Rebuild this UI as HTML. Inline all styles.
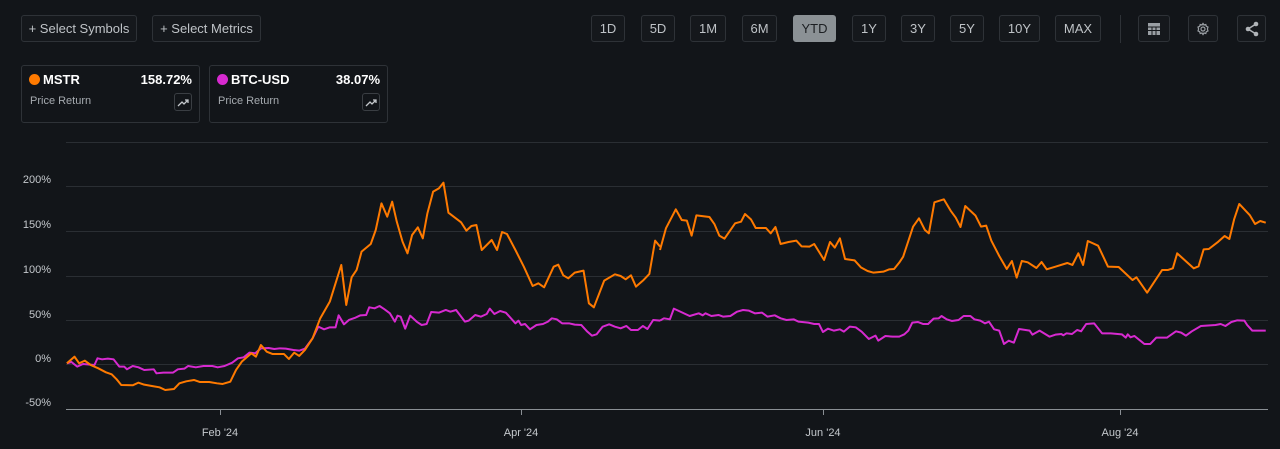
<!DOCTYPE html>
<html><head><style>
body{margin:0;background:#121519;width:1280px;height:449px;overflow:hidden;font-family:"Liberation Sans",sans-serif;position:relative}
.b{position:absolute;top:15px;height:27px;border:1px solid #2e3237;border-radius:3px;box-sizing:border-box;color:#bfc3c7;font-size:13px;display:flex;align-items:center;justify-content:center;background:#15181c}
.card{position:absolute;top:65px;height:58px;width:179px;border:1px solid #2e3237;border-radius:3px;box-sizing:border-box}
.dot{position:absolute;left:7px;top:8px;width:11px;height:11px;border-radius:50%}
.nm{position:absolute;left:21px;top:6px;color:#fff;font-weight:bold;font-size:13px}
.pc{position:absolute;right:7px;top:6px;color:#fff;font-weight:bold;font-size:13px}
.pr{position:absolute;left:8px;top:29px;color:#a6abb0;font-size:11px}
.ic{position:absolute;right:7px;top:27px;width:18px;height:18px;border:1px solid #3a3e43;border-radius:3px;box-sizing:border-box}
.yl{position:absolute;left:0;width:51px;text-align:right;color:#c4c8cc;font-size:11px}
.xl{position:absolute;top:427px;color:#c4c8cc;font-size:11px;width:80px;text-align:center}
</style></head><body>
<div class="b" style="left:21px;width:116px">+ Select Symbols</div>
<div class="b" style="left:152px;width:109px">+ Select Metrics</div>
<div class="b" style="left:591px;width:34px">1D</div>
<div class="b" style="left:641px;width:34px">5D</div>
<div class="b" style="left:690px;width:36px">1M</div>
<div class="b" style="left:742px;width:35px">6M</div>
<div class="b" style="left:793px;width:43px;background:#8b9195;color:#1c1f22;border-color:#8b9195">YTD</div>
<div class="b" style="left:852px;width:34px">1Y</div>
<div class="b" style="left:901px;width:34px">3Y</div>
<div class="b" style="left:950px;width:34px">5Y</div>
<div class="b" style="left:999px;width:41px">10Y</div>
<div class="b" style="left:1055px;width:46px">MAX</div>
<div style="position:absolute;left:1120px;top:15px;width:1px;height:28px;background:#2e3237"></div>
<div class="b" style="left:1138px;width:32px"><svg width="12" height="12" viewBox="0 0 12 12"><rect x="0" y="0" width="12" height="12" fill="#9a9fa4"/><path d="M0 4h12M0 7.5h12M4 4v8M8 4v8" stroke="#15181c" stroke-width="1"/></svg></div>
<div class="b" style="left:1188px;width:30px"><svg width="14" height="14" viewBox="0 0 14 14" fill="none" stroke="#9a9fa4" stroke-width="1.2"><circle cx="7" cy="7" r="2"/><path d="M7 1.5l1 1.5 1.8-.5.5 1.8 1.7.8-.6 1.9.6 1.9-1.7.8-.5 1.8-1.8-.5-1 1.5-1-1.5-1.8.5-.5-1.8-1.7-.8.6-1.9-.6-1.9 1.7-.8.5-1.8 1.8.5z"/></svg></div>
<div class="b" style="left:1237px;width:29px"><svg width="16" height="16" viewBox="0 0 16 16"><path d="M12 3L4 8l8 5" stroke="#b0b4b8" stroke-width="1.5" fill="none"/><circle cx="12" cy="3" r="2.3" fill="#b0b4b8"/><circle cx="4" cy="8" r="2.3" fill="#b0b4b8"/><circle cx="12" cy="13" r="2.3" fill="#b0b4b8"/></svg></div>

<div class="card" style="left:21px"><div class="dot" style="background:#ff7a00"></div><div class="nm">MSTR</div><div class="pc">158.72%</div><div class="pr">Price Return</div><div class="ic"><svg width="16" height="16" viewBox="0 0 16 16"><path d="M3 12l4-4 2 2 4-4M10 6h3v3" stroke="#c4c8cc" stroke-width="1.3" fill="none"/></svg></div></div>
<div class="card" style="left:209px"><div class="dot" style="background:#d72ad0"></div><div class="nm">BTC-USD</div><div class="pc">38.07%</div><div class="pr">Price Return</div><div class="ic"><svg width="16" height="16" viewBox="0 0 16 16"><path d="M3 12l4-4 2 2 4-4M10 6h3v3" stroke="#c4c8cc" stroke-width="1.3" fill="none"/></svg></div></div>

<svg style="position:absolute;left:0;top:0" width="1280" height="449">
<g stroke="#2a2e33" stroke-width="1">
<path d="M66 142.5H1268M66 186.5H1268M66 231.5H1268M66 276.5H1268M66 320.5H1268M66 364.5H1268"/>
</g>
<path d="M66 409.5H1268M220.5 409v6M521.5 409v6M823.5 409v6M1120.5 409v6" stroke="#8a8f94" stroke-width="1"/>
<g transform="translate(60,170) scale(0.3827,0.3333)" fill="none" stroke-width="2" stroke-linejoin="round">
<polyline vector-effect="non-scaling-stroke" stroke="#d72ad0" points="18,580 30,576 45,590 60,582 90,585 98,565 110,568 125,566 140,568 155,590 168,590 175,598 190,588 205,592 220,600 245,598 252,610 270,608 295,608 308,598 325,596 335,588 355,592 375,588 398,588 412,592 430,588 450,578 465,565 480,562 495,548 510,550 525,535 545,534 560,537 575,535 590,536 610,540 625,542 640,536 660,505 675,470 690,478 705,472 720,472 728,436 742,463 755,450 770,444 785,436 800,435 808,412 822,415 835,408 848,418 862,430 875,455 882,437 890,440 902,476 915,437 932,455 945,465 958,462 970,426 990,428 1008,420 1020,425 1035,420 1058,455 1068,452 1085,435 1100,440 1115,432 1123,416 1135,432 1150,423 1165,428 1190,460 1198,452 1205,465 1215,462 1228,478 1245,465 1262,462 1275,455 1285,445 1298,448 1312,460 1330,460 1345,464 1362,465 1378,485 1390,497 1402,493 1418,470 1435,463 1450,470 1465,475 1480,468 1492,480 1510,480 1523,468 1535,477 1550,450 1568,452"/>
<polyline vector-effect="non-scaling-stroke" stroke="#ff7a00" points="18,580 38,560 50,580 65,572 80,585 100,595 120,607 135,613 148,628 160,645 190,646 205,638 220,644 240,648 260,652 275,660 298,657 312,640 330,634 350,630 365,636 390,636 410,640 425,642 445,635 460,600 475,575 490,560 500,550 512,560 525,525 540,545 555,552 585,552 598,567 612,548 625,558 640,540 660,505 680,445 705,395 720,340 735,285 748,405 762,322 775,300 788,245 812,222 825,180 840,100 855,140 868,95 880,155 895,215 908,250 920,195 935,172 948,205 960,130 975,65 990,55 1002,38 1015,128 1048,157 1062,182 1075,168 1088,165 1102,240 1128,210 1142,240 1155,186 1168,192 1190,240 1212,290 1235,348 1250,340 1265,352 1290,290 1302,284 1315,316 1328,325 1345,308 1368,302 1382,400 1395,412 1422,332 1450,313 1465,318 1478,328 1492,316 1505,350 1525,330 1540,312 1555,212 1568,230"/>
</g>
<g transform="translate(660,170) scale(0.3954,0.3333)" fill="none" stroke-width="2" stroke-linejoin="round">
<polyline vector-effect="non-scaling-stroke" stroke="#d72ad0" points="0,452 10,445 25,448 35,416 75,438 98,430 108,436 115,430 130,438 148,435 160,440 178,438 195,425 210,420 225,422 240,430 258,428 272,440 290,436 305,445 320,450 338,448 350,455 375,458 390,462 402,462 412,486 425,476 440,482 455,478 465,485 480,470 495,472 510,485 528,507 545,497 552,512 570,498 588,500 605,500 618,493 628,482 638,458 652,456 665,462 678,462 692,446 705,445 712,438 725,448 738,453 755,450 768,438 785,438 795,448 810,452 822,460 832,455 845,478 858,482 870,522 882,512 895,518 908,477 935,482 942,494 960,482 985,500 1000,494 1015,492 1020,496 1028,490 1042,492 1055,480 1065,484 1078,462 1098,460 1118,490 1140,490 1168,493 1178,503 1183,493 1190,502 1200,498 1225,522 1240,522 1255,503 1282,503 1305,484 1318,488 1330,497 1345,484 1368,468 1405,465 1418,462 1430,468 1445,456 1460,451 1478,452 1485,465 1498,482 1532,482"/>
<polyline vector-effect="non-scaling-stroke" stroke="#ff7a00" points="0,240 15,175 40,118 55,150 68,152 80,197 92,136 125,141 138,163 150,197 163,206 190,160 205,155 215,132 230,148 242,174 268,174 280,190 292,171 305,222 325,216 345,212 358,229 378,230 390,222 415,270 430,216 442,233 455,205 468,267 492,271 508,292 525,303 540,308 565,305 580,298 592,297 605,278 615,260 640,170 655,145 670,180 680,190 694,97 718,88 735,122 748,143 760,171 772,108 798,137 812,170 825,167 838,212 858,258 877,297 890,273 902,323 915,273 930,277 952,294 965,276 978,298 1000,290 1030,279 1043,285 1058,250 1070,285 1082,213 1108,227 1133,290 1160,291 1195,330 1205,322 1232,368 1270,300 1285,300 1297,295 1308,250 1350,295 1362,289 1375,238 1388,237 1412,215 1428,198 1440,207 1452,148 1465,102 1492,136 1505,162 1518,153 1532,158"/>
</g>
</svg>
<div class="yl" style="top:174px">200%</div>
<div class="yl" style="top:219px">150%</div>
<div class="yl" style="top:264px">100%</div>
<div class="yl" style="top:309px">50%</div>
<div class="yl" style="top:353px">0%</div>
<div class="yl" style="top:397px">-50%</div>
<div class="xl" style="left:180px">Feb '24</div>
<div class="xl" style="left:481px">Apr '24</div>
<div class="xl" style="left:783px">Jun '24</div>
<div class="xl" style="left:1080px">Aug '24</div>
</body></html>
